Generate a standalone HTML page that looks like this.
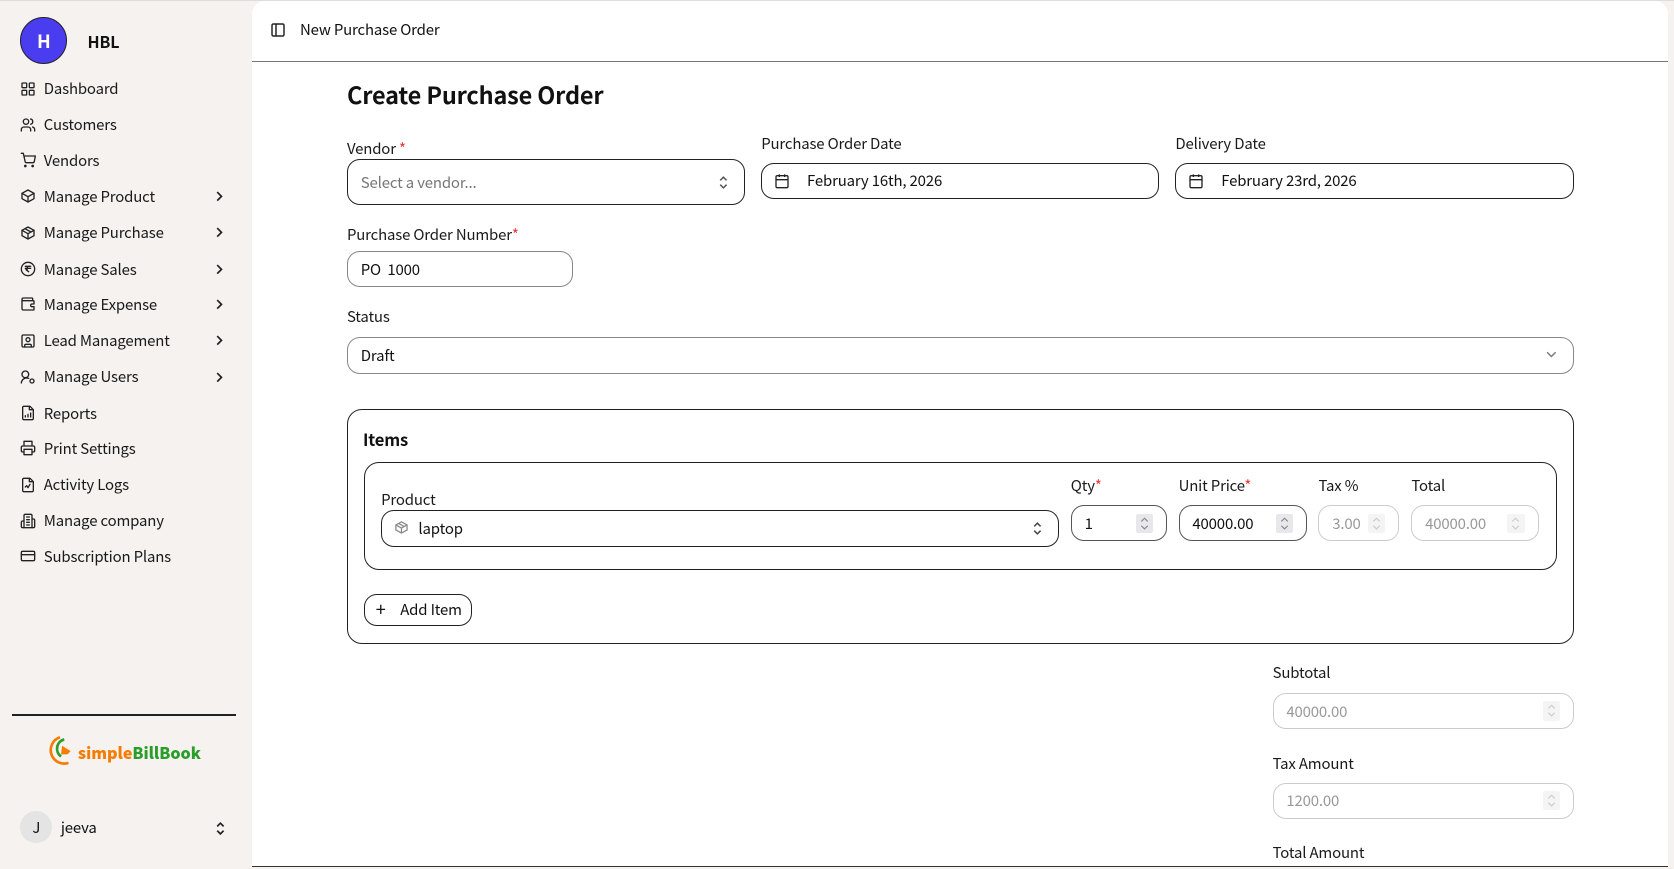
<!DOCTYPE html>
<html><head><meta charset="utf-8"><style>
html,body{margin:0;padding:0;background:#f5f2ef;overflow:hidden}
body{width:1674px;height:869px}
#r{zoom:1.0676;width:1568px;height:814px;position:relative;font-family:"Noto Sans CJK JP","Liberation Sans",sans-serif;color:#111;font-size:14px;letter-spacing:-0.15px}
.a{position:absolute}
.ni{position:absolute;left:19px;display:flex;align-items:center;height:20px;font-size:14px;color:#1a1a1a}
.ni svg{width:15px;height:15px;margin-right:7px;fill:none;stroke:#222;stroke-width:2;stroke-linecap:round;stroke-linejoin:round}
.chev{position:absolute;left:200px;width:10px;height:10px}
.main{position:absolute;left:236px;top:1px;width:1326px;height:810px;background:#fff;border-radius:12px 12px 0 0;border-bottom:1.5px solid #333}
.lbl{position:absolute;font-size:14px;color:#1a1a1a}
.req{color:#e33}
.box{position:absolute;border:1.3px solid #222;border-radius:12px;box-sizing:border-box;display:flex;align-items:center;font-size:14px}
.dis{border-color:#ccc;color:#999}
.spin{position:absolute;width:16px;height:18px;background:#e8e8ec;border-radius:2px}
.spin svg{width:16px;height:18px}
</style></head><body><div id="r">
<div class="a" style="left:0;top:0;width:1568px;height:1px;background:#ddd"></div>
<div class="a" style="left:19px;top:16px;width:44px;height:44px;border-radius:50%;background:#4a3df0;border:1px solid #222;box-sizing:border-box;color:#fff;font-weight:bold;font-size:17px;display:flex;align-items:center;justify-content:center">H</div>
<div class="a" style="left:82px;top:27px;font-weight:bold;font-size:15px">HBL</div>

<div class="ni" style="top:73px"><svg viewBox="0 0 24 24"><rect x="3" y="3" width="7" height="7" rx="1"/><rect x="14" y="3" width="7" height="7" rx="1"/><rect x="3" y="14" width="7" height="7" rx="1"/><rect x="14" y="14" width="7" height="7" rx="1"/></svg>Dashboard</div>
<div class="ni" style="top:107px"><svg viewBox="0 0 24 24"><circle cx="9" cy="7" r="4"/><path d="M2 21v-2a4 4 0 0 1 4-4h6a4 4 0 0 1 4 4v2M16 3.1a4 4 0 0 1 0 7.8M22 21v-2a4 4 0 0 0-3-3.9"/></svg>Customers</div>
<div class="ni" style="top:140px"><svg viewBox="0 0 24 24"><circle cx="8" cy="21" r="1"/><circle cx="19" cy="21" r="1"/><path d="M2 2h3l2.7 12.4a2 2 0 0 0 2 1.6h9.7a2 2 0 0 0 2-1.6L23 6H6"/></svg>Vendors</div>
<div class="ni" style="top:174px"><svg viewBox="0 0 24 24"><path d="M21 8l-9-5-9 5v8l9 5 9-5z"/><path d="M3 8l9 5 9-5M12 13v8"/></svg>Manage Product</div>
<div class="ni" style="top:208px"><svg viewBox="0 0 24 24"><path d="M21 8l-9-5-9 5v8l9 5 9-5z"/><path d="M3 8l9 5 9-5M12 13v8M7.5 5.5l9 5"/></svg>Manage Purchase</div>
<div class="ni" style="top:242px"><svg viewBox="0 0 24 24"><circle cx="12" cy="12" r="10"/><path d="M8 8h8M8 11h8M13 16l-4-3h1a3 3 0 0 0 0-5"/></svg>Manage Sales</div>
<div class="ni" style="top:275px"><svg viewBox="0 0 24 24"><path d="M19 7V4a1 1 0 0 0-1-1H5a2 2 0 0 0 0 4h15a1 1 0 0 1 1 1v4h-3a2 2 0 0 0 0 4h3v4a1 1 0 0 1-1 1H5a2 2 0 0 1-2-2V5"/></svg>Manage Expense</div>
<div class="ni" style="top:309px"><svg viewBox="0 0 24 24"><rect x="3" y="3" width="18" height="18" rx="2"/><circle cx="12" cy="10" r="3"/><path d="M7 21v-2a2 2 0 0 1 2-2h6a2 2 0 0 1 2 2v2"/></svg>Lead Management</div>
<div class="ni" style="top:343px"><svg viewBox="0 0 24 24"><circle cx="8" cy="8" r="5"/><path d="M2 21a8 8 0 0 1 11-7"/><circle cx="18" cy="18" r="3"/></svg>Manage Users</div>
<div class="ni" style="top:377px"><svg viewBox="0 0 24 24"><path d="M15 2H6a2 2 0 0 0-2 2v16a2 2 0 0 0 2 2h12a2 2 0 0 0 2-2V7z"/><path d="M14 2v5h5M8 18v-2M12 18v-4M16 18v-6"/></svg>Reports</div>
<div class="ni" style="top:410px"><svg viewBox="0 0 24 24"><path d="M6 9V2h12v7M6 18H4a2 2 0 0 1-2-2v-5a2 2 0 0 1 2-2h16a2 2 0 0 1 2 2v5a2 2 0 0 1-2 2h-2"/><rect x="6" y="14" width="12" height="8"/></svg>Print Settings</div>
<div class="ni" style="top:444px"><svg viewBox="0 0 24 24"><path d="M15 2H6a2 2 0 0 0-2 2v16a2 2 0 0 0 2 2h12a2 2 0 0 0 2-2V7z"/><path d="M14 2v5h5M8 15l2-2 2 3 3-5"/></svg>Activity Logs</div>
<div class="ni" style="top:478px"><svg viewBox="0 0 24 24"><path d="M6 22V4a2 2 0 0 1 2-2h8a2 2 0 0 1 2 2v18zM6 12H4a2 2 0 0 0-2 2v6a2 2 0 0 0 2 2h2M18 9h2a2 2 0 0 1 2 2v9a2 2 0 0 1-2 2h-2M10 6h4M10 10h4M10 14h4M10 18h4"/></svg>Manage company</div>
<div class="ni" style="top:511px"><svg viewBox="0 0 24 24"><rect x="2" y="5" width="20" height="14" rx="2"/><path d="M2 10h20"/></svg>Subscription Plans</div>
<svg class="chev" style="top:179px" viewBox="0 0 10 10"><path d="M3 1l4 4-4 4" fill="none" stroke="#222" stroke-width="1.6"/></svg>
<svg class="chev" style="top:213px" viewBox="0 0 10 10"><path d="M3 1l4 4-4 4" fill="none" stroke="#222" stroke-width="1.6"/></svg>
<svg class="chev" style="top:247px" viewBox="0 0 10 10"><path d="M3 1l4 4-4 4" fill="none" stroke="#222" stroke-width="1.6"/></svg>
<svg class="chev" style="top:280px" viewBox="0 0 10 10"><path d="M3 1l4 4-4 4" fill="none" stroke="#222" stroke-width="1.6"/></svg>
<svg class="chev" style="top:314px" viewBox="0 0 10 10"><path d="M3 1l4 4-4 4" fill="none" stroke="#222" stroke-width="1.6"/></svg>
<svg class="chev" style="top:348px" viewBox="0 0 10 10"><path d="M3 1l4 4-4 4" fill="none" stroke="#222" stroke-width="1.6"/></svg>

<div class="a" style="left:11px;top:669px;width:210px;height:1.5px;background:#222"></div>
<svg class="a" style="left:42px;top:687px" width="34" height="32" viewBox="0 0 34 32"><path d="M14 4a12 12 0 1 0 8 24" fill="none" stroke="#f57c00" stroke-width="2.5"/><path d="M18 6a9 9 0 0 0-3 16" fill="none" stroke="#2a9d2a" stroke-width="2.5"/><path d="M16 12l8 5-3 3h-6z" fill="#f57c00"/></svg>
<div class="a" style="left:73px;top:693px;font-weight:900;font-size:15px;letter-spacing:0"><span style="color:#f57c00">simple</span><span style="color:#2a9d2a">BillBook</span></div>
<div class="a" style="left:19px;top:760px;width:30px;height:30px;border-radius:50%;background:#e4e4e4;display:flex;align-items:center;justify-content:center;font-size:14px">J</div>
<div class="a" style="left:57px;top:765px;font-size:14px">jeeva</div>
<svg class="a" style="left:200px;top:768px" width="12" height="16" viewBox="0 0 12 16"><path d="M3 6l3-3 3 3M3 10l3 3 3-3" fill="none" stroke="#222" stroke-width="1.6"/></svg>

<div class="main">
 <svg class="a" style="left:17px;top:20px" width="15" height="15" viewBox="0 0 24 24"><rect x="3" y="3" width="18" height="18" rx="2" fill="none" stroke="#222" stroke-width="2.2"/><path d="M9 3v18" stroke="#222" stroke-width="2.2"/></svg>
 <div class="a" style="left:45px;top:17px;font-size:14px">New Purchase Order</div>
 <div class="a" style="left:0;top:56px;width:1326px;height:1.3px;background:#777"></div>

 <div class="a" style="left:89px;top:71px;font-size:22px;font-weight:bold">Create Purchase Order</div>

 <div class="lbl" style="left:89px;top:128px">Vendor <span class="req">*</span></div>
 <div class="box" style="left:89px;top:148px;width:373px;height:43px;color:#777;padding-left:12px">Select a vendor...</div>
 <svg class="a" style="left:436px;top:162px" width="12" height="16" viewBox="0 0 12 16"><path d="M3 6l3-3 3 3M3 10l3 3 3-3" fill="none" stroke="#555" stroke-width="1.4"/></svg>

 <div class="lbl" style="left:477px;top:124px">Purchase Order Date</div>
 <div class="box" style="left:477px;top:152px;width:373px;height:33px;padding-left:42px">February 16th, 2026</div>
 <svg class="a" style="left:489px;top:161px" width="15" height="15" viewBox="0 0 24 24" fill="none" stroke="#222" stroke-width="2"><rect x="3" y="4" width="18" height="18" rx="2"/><path d="M16 2v4M8 2v4M3 10h18"/></svg>
 <div class="lbl" style="left:865px;top:124px">Delivery Date</div>
 <div class="box" style="left:865px;top:152px;width:373px;height:33px;padding-left:42px">February 23rd, 2026</div>
 <svg class="a" style="left:877px;top:161px" width="15" height="15" viewBox="0 0 24 24" fill="none" stroke="#222" stroke-width="2"><rect x="3" y="4" width="18" height="18" rx="2"/><path d="M16 2v4M8 2v4M3 10h18"/></svg>

 <div class="lbl" style="left:89px;top:209px">Purchase Order Number<span class="req">*</span></div>
 <div class="box" style="left:89px;top:234px;width:212px;height:34px;border-color:#888;padding-left:12px">PO&nbsp;&nbsp;1000</div>

 <div class="lbl" style="left:89px;top:286px">Status</div>
 <div class="box" style="left:89px;top:315px;width:1149px;height:34px;border-color:#888;padding-left:12px">Draft</div>
 <svg class="a" style="left:1211px;top:325px" width="12" height="12" viewBox="0 0 12 12"><path d="M2 4l4 4 4-4" fill="none" stroke="#777" stroke-width="1.3"/></svg>

 <div class="box" style="left:89px;top:382px;width:1149px;height:220px;border-radius:14px"></div>
 <div class="a" style="left:104px;top:399px;font-weight:bold;font-size:15.5px">Items</div>
 <div class="box" style="left:105px;top:432px;width:1117px;height:101px;border-radius:14px"></div>
 <div class="lbl" style="left:121px;top:457px">Product</div>
 <div class="box" style="left:121px;top:477px;width:635px;height:34px;padding-left:34px">laptop</div>
 <svg class="a" style="left:133px;top:486px" width="14" height="14" viewBox="0 0 24 24" fill="none" stroke="#888" stroke-width="2"><path d="M21 8l-9-5-9 5v8l9 5 9-5z"/><path d="M3 8l9 5 9-5M12 13v8M7.5 5.5l9 5"/></svg>
 <svg class="a" style="left:730px;top:486px" width="12" height="16" viewBox="0 0 12 16"><path d="M3 6l3-3 3 3M3 10l3 3 3-3" fill="none" stroke="#444" stroke-width="1.4"/></svg>

 <div class="lbl" style="left:767px;top:444px">Qty<span class="req">*</span></div>
 <div class="box" style="left:767px;top:472px;width:90px;height:34px;border-color:#555;padding-left:12px">1</div>
 <div class="spin" style="left:828px;top:480px"><svg viewBox="0 0 16 18"><path d="M5 7l3-3 3 3M5 11l3 3 3-3" fill="none" stroke="#888" stroke-width="1.1"/></svg></div>
 <div class="lbl" style="left:868px;top:444px">Unit Price<span class="req">*</span></div>
 <div class="box" style="left:868px;top:472px;width:120px;height:34px;border-color:#555;padding-left:12px">40000.00</div>
 <div class="spin" style="left:959px;top:480px"><svg viewBox="0 0 16 18"><path d="M5 7l3-3 3 3M5 11l3 3 3-3" fill="none" stroke="#888" stroke-width="1.1"/></svg></div>
 <div class="lbl" style="left:999px;top:444px">Tax %</div>
 <div class="box dis" style="left:999px;top:472px;width:75px;height:34px;padding-left:12px">3.00</div>
 <div class="spin" style="left:1045px;top:480px;background:#f4f4f4"><svg viewBox="0 0 16 18"><path d="M5 7l3-3 3 3M5 11l3 3 3-3" fill="none" stroke="#ccc" stroke-width="1.1"/></svg></div>
 <div class="lbl" style="left:1086px;top:444px">Total</div>
 <div class="box dis" style="left:1086px;top:472px;width:120px;height:34px;padding-left:12px">40000.00</div>
 <div class="spin" style="left:1176px;top:480px;background:#f4f4f4"><svg viewBox="0 0 16 18"><path d="M5 7l3-3 3 3M5 11l3 3 3-3" fill="none" stroke="#ccc" stroke-width="1.1"/></svg></div>

 <div class="box" style="left:105px;top:555px;width:101px;height:30px;padding-left:33px;border-radius:12px">Add Item</div>
 <div class="a" style="left:116px;top:562px;font-size:17px;line-height:16px">+</div>

 <div class="lbl" style="left:956px;top:619px">Subtotal</div>
 <div class="box dis" style="left:956px;top:648px;width:282px;height:34px;padding-left:12px">40000.00</div>
 <div class="spin" style="left:1209px;top:656px;background:#f4f4f4"><svg viewBox="0 0 16 18"><path d="M5 7l3-3 3 3M5 11l3 3 3-3" fill="none" stroke="#ccc" stroke-width="1.1"/></svg></div>
 <div class="lbl" style="left:956px;top:704px">Tax Amount</div>
 <div class="box dis" style="left:956px;top:732px;width:282px;height:34px;padding-left:12px">1200.00</div>
 <div class="spin" style="left:1209px;top:740px;background:#f4f4f4"><svg viewBox="0 0 16 18"><path d="M5 7l3-3 3 3M5 11l3 3 3-3" fill="none" stroke="#ccc" stroke-width="1.1"/></svg></div>
 <div class="lbl" style="left:956px;top:788px">Total Amount</div>
</div>
</div></body></html>
